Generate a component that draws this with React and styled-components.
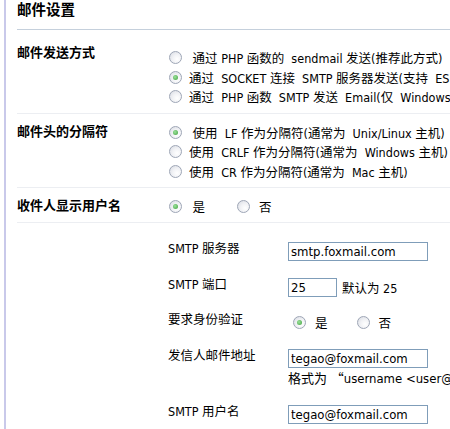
import React from "react";
import styled, { createGlobalStyle } from "styled-components";

const GlobalStyle = createGlobalStyle`
  html, body {
    margin: 0;
    padding: 0;
    overflow: hidden;
    background: #fff;
  }
  body {
    font-family: "DejaVu Sans Condensed", "Noto Sans CJK SC", sans-serif;
    font-size: 12.5px;
    color: #000;
  }
`;

const Page = styled.div`
  margin-left: 4px;
  border-left: 2px solid #c9c9ea;
  padding-left: 11px;
  width: 700px;
  min-height: 429px;
`;

const Title = styled.div`
  font-size: 14.5px;
  font-weight: bold;
  line-height: 20px;
  padding: 0 0 9px;
  border-bottom: 1px solid #c5d0dc;
`;

const Section = styled.div`
  display: grid;
  grid-template-columns: 147px 1fr;
  padding: ${(p) => p.$top || "8px"} 0 6px;
  border-bottom: 1px solid #eceef2;
`;

const Label = styled.div`
  font-size: 13px;
  font-weight: bold;
  line-height: 20px;
`;

const Options = styled.div`
  display: flex;
  flex-direction: column;
  padding-top: ${(p) => p.$top || "1px"};
`;

const Inline = styled.div`
  display: flex;
  align-items: center;
  height: 20px;
`;

const Option = styled.label`
  display: flex;
  align-items: center;
  height: 19.5px;
  white-space: pre;
  margin-right: ${(p) => p.$after || "0"};
`;

const Radio = styled.span`
  flex: none;
  width: 11px;
  height: 11px;
  margin: 0 ${(p) => p.$gap || "7px"} 0 5px;
  border: 1px solid #9ea6b6;
  border-radius: 50%;
  background: radial-gradient(circle at 65% 65%, #ffffff 0%, #f1f2f5 45%, #d6d9e1 100%);
  display: flex;
  align-items: center;
  justify-content: center;

  &::after {
    content: "";
    width: 5px;
    height: 5px;
    border-radius: 50%;
    background: ${(p) =>
      p.$checked ? "radial-gradient(circle at 40% 40%, #9be39a, #3f9e3e)" : "transparent"};
  }
`;

const SubTable = styled.div`
  margin-left: 151px;
  padding-top: 10px;
`;

const SubRow = styled.div`
  display: grid;
  grid-template-columns: 120px 1fr;
  align-items: start;
  padding: 6px 0 7.5px;
`;

const SubLabel = styled.div`
  line-height: 20px;
`;

const Value = styled.div`
  display: flex;
  flex-direction: column;
  align-items: flex-start;
`;

const Field = styled.div`
  display: flex;
  align-items: center;
  margin-top: 3px;
  white-space: pre;
`;

const TextInput = styled.input`
  box-sizing: border-box;
  width: ${(p) => p.$w}px;
  height: 19px;
  margin: 0 5px 0 0;
  padding: 0 2px;
  border: 1px solid #7f9db9;
  font-family: "DejaVu Sans Condensed", sans-serif;
  font-size: 13px;
  color: #000;
  background: #fff;
  outline: none;
`;

const Hint = styled.div`
  font-size: 13px;
  line-height: 16px;
  margin: 2px 0 1px;
  white-space: pre;
`;

const WideQuote = styled.span`
  font-family: "Noto Sans CJK SC", sans-serif;
`;

export default function App() {
  return (
    <>
      <GlobalStyle />
      <Page>
        <Title>邮件设置</Title>

        <Section $top="13px">
          <Label>邮件发送方式</Label>
          <Options $top="5px">
            <Option>
              <Radio />
              {" 通过 PHP 函数的  sendmail 发送(推荐此方式)"}
            </Option>
            <Option>
              <Radio $checked />
              {"通过  SOCKET 连接  SMTP 服务器发送(支持  ESMTP 验证)"}
            </Option>
            <Option>
              <Radio />
              {"通过  PHP 函数  SMTP 发送  Email(仅  Windows 主机下有效)"}
            </Option>
          </Options>
        </Section>

        <Section>
          <Label>邮件头的分隔符</Label>
          <Options>
            <Option>
              <Radio $checked />
              {" 使用  LF 作为分隔符(通常为  Unix/Linux 主机)"}
            </Option>
            <Option>
              <Radio />
              {"使用  CRLF 作为分隔符(通常为  Windows 主机)"}
            </Option>
            <Option>
              <Radio />
              {"使用  CR 作为分隔符(通常为  Mac 主机)"}
            </Option>
          </Options>
        </Section>

        <Section>
          <Label>收件人显示用户名</Label>
          <Inline>
            <Option $after="27px">
              <Radio $checked />
              {" 是"}
            </Option>
            <Option>
              <Radio $gap="9px" />
              否
            </Option>
          </Inline>
        </Section>

        <SubTable>
          <SubRow>
            <SubLabel>SMTP 服务器</SubLabel>
            <Value>
              <Field>
                <TextInput $w={140} defaultValue="smtp.foxmail.com" />
              </Field>
            </Value>
          </SubRow>
          <SubRow>
            <SubLabel>SMTP 端口</SubLabel>
            <Value>
              <Field>
                <TextInput $w={49} defaultValue="25" />
                默认为 25
              </Field>
            </Value>
          </SubRow>
          <SubRow>
            <SubLabel>要求身份验证</SubLabel>
            <Value>
              <Field>
                <Option $after="24px">
                  <Radio $checked $gap="9px" />是
                </Option>
                <Option>
                  <Radio $gap="9px" />否
                </Option>
              </Field>
            </Value>
          </SubRow>
          <SubRow>
            <SubLabel>发信人邮件地址</SubLabel>
            <Value>
              <Field>
                <TextInput $w={140} defaultValue="tegao@foxmail.com" />
              </Field>
              <Hint>
                {"格式为 "}
                <WideQuote>“</WideQuote>
                {"username <user@domain.com>"}
                <WideQuote>”</WideQuote>
                {"，可以只填写邮件地址"}
              </Hint>
            </Value>
          </SubRow>
          <SubRow>
            <SubLabel>SMTP 用户名</SubLabel>
            <Value>
              <Field>
                <TextInput $w={140} defaultValue="tegao@foxmail.com" />
              </Field>
            </Value>
          </SubRow>
        </SubTable>
      </Page>
    </>
  );
}
